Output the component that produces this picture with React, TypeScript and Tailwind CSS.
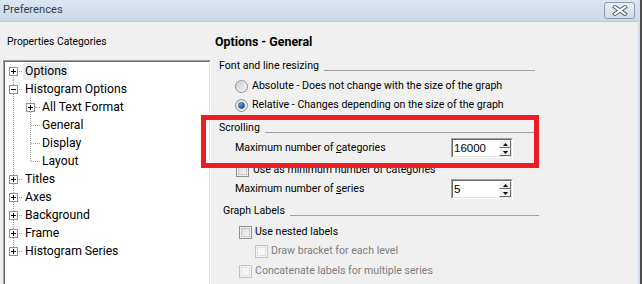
import React from "react";

const FONT = "font-['Roboto',sans-serif]";

function TreeRow({
  level,
  label,
  box,
  first,
  last,
  childLast,
  selected,
}: {
  level: 0 | 1;
  label: string;
  box?: "+" | "-";
  first?: boolean;
  last?: boolean;
  childLast?: boolean;
  selected?: boolean;
}) {
  const w = level === 0 ? 18 : 35;
  return (
    <div className="flex h-[18px] items-center">
      <svg width={w} height={18} className="shrink-0" shapeRendering="crispEdges">
        <line
          x1={8.5}
          x2={8.5}
          y1={level === 0 && first ? 9 : 0}
          y2={level === 0 && last ? 9 : 18}
          stroke="#a0a0a0"
          strokeDasharray="1 1"
        />
        {level === 0 && (
          <line x1={12} x2={18} y1={9.5} y2={9.5} stroke="#a0a0a0" strokeDasharray="1 1" />
        )}
        {level === 1 && (
          <>
            <line
              x1={25.5}
              x2={25.5}
              y1={0}
              y2={childLast ? 9 : 18}
              stroke="#a0a0a0"
              strokeDasharray="1 1"
            />
            <line x1={26} x2={35} y1={9.5} y2={9.5} stroke="#a0a0a0" strokeDasharray="1 1" />
          </>
        )}
        {box && (
          <g>
            <rect
              x={level === 0 ? 4.5 : 21.5}
              y={5.5}
              width={8}
              height={8}
              fill="#fff"
              stroke="#919191"
            />
            <line
              x1={level === 0 ? 6 : 23}
              x2={level === 0 ? 11 : 28}
              y1={9.5}
              y2={9.5}
              stroke="#000"
            />
            {box === "+" && (
              <line
                x1={level === 0 ? 8.5 : 25.5}
                x2={level === 0 ? 8.5 : 25.5}
                y1={7}
                y2={12}
                stroke="#000"
              />
            )}
          </g>
        )}
      </svg>
      <span
        className={`px-[2px] h-[17px] leading-[17px] text-[12.2px] text-black whitespace-nowrap ${
          selected ? "bg-[#ececec]" : ""
        }`}
      >
        {label}
      </span>
    </div>
  );
}

function Radio({ checked }: { checked?: boolean }) {
  return (
    <div className="w-[13px] h-[13px] rounded-full border border-[#8e8f8f] bg-gradient-to-br from-[#d9d9d9] to-[#f8f8f8] flex items-center justify-center shrink-0">
      {checked ? (
        <div className="w-[7px] h-[7px] rounded-full bg-gradient-to-br from-[#8ccaf0] via-[#2c7dc2] to-[#0b4d8c] border border-[#1e5a8f]" />
      ) : (
        <div className="w-[9px] h-[9px] rounded-full bg-gradient-to-br from-[#cfcfcf] to-[#f2f2f2]" />
      )}
    </div>
  );
}

function Check({ disabled }: { disabled?: boolean }) {
  return (
    <div
      className={`w-[13px] h-[13px] border shrink-0 flex items-center justify-center ${
        disabled ? "border-[#c4c4c4] bg-[#f4f4f4]" : "border-[#8e8f8f] bg-[#f4f4f4]"
      }`}
    >
      <div
        className={`w-[9px] h-[9px] ${
          disabled
            ? "border border-[#e2e2e2] bg-[#f6f6f6]"
            : "border border-[#c6c6c6] bg-gradient-to-br from-[#dadada] to-[#f7f7f7]"
        }`}
      />
    </div>
  );
}

function Spin({ value }: { value: string }) {
  return (
    <div className="w-[62px] h-[20px] border-t border-l border-[#a0a0a0] border-r border-b border-r-white border-b-white flex">
      <div className="flex-1 flex border-t border-l border-[#696969] border-r border-b border-r-[#e3e3e3] border-b-[#e3e3e3] bg-white">
        <div className="flex-1 pl-[1px] text-[11.5px] leading-[16px] font-['Liberation_Sans',sans-serif] text-black">
          {value}
        </div>
        <div className="w-[12px] flex flex-col bg-[#f0f0f0]">
          <div className="flex-1 flex items-center justify-center border-t border-l border-white border-r border-b border-r-[#696969] border-b-[#696969]">
            <svg width="5" height="3" viewBox="0 0 5 3">
              <path d="M2.5 0 L5 3 L0 3 Z" fill="#000" />
            </svg>
          </div>
          <div className="flex-1 flex items-center justify-center border-t border-l border-white border-r border-b border-r-[#696969] border-b-[#696969]">
            <svg width="5" height="3" viewBox="0 0 5 3">
              <path d="M0 0 L5 0 L2.5 3 Z" fill="#000" />
            </svg>
          </div>
        </div>
      </div>
    </div>
  );
}

function GroupLabel({ text, pl, pr }: { text: string; pl: string; pr: string }) {
  return (
    <div className={`flex items-center h-[16px] ${pl} ${pr}`}>
      <span className="whitespace-nowrap">{text}</span>
      <div className="flex-1 h-px bg-[#a0a0a0] mt-[9px] ml-[5px]" />
    </div>
  );
}

export default function App() {
  return (
    <div
      className={`relative w-[642px] h-[284px] overflow-hidden flex bg-[#f0f0f0] text-[10.6px] text-black ${FONT}`}
    >
      <div className="flex-1 flex flex-col min-w-0">
        <div className="h-[22px] shrink-0 flex items-center bg-gradient-to-b from-[#dbe6f2] to-[#c9d8e9] border-b border-[#b9c9da]">
          <span className="pl-[3px] text-[11.2px] text-[#3a3f45]">Preferences</span>
          <div className="flex-1" />
          <div className="mr-[3px] w-[31px] h-[17px] rounded-[3px] border border-[#8b9bb0] bg-gradient-to-b from-[#e9eff6] to-[#d2ddea] flex items-center justify-center">
            <svg width="16" height="11" viewBox="0 0 16 11">
              <path d="M3 2 L13 9 M13 2 L3 9" stroke="#5a6675" strokeWidth="4" strokeLinecap="square" />
              <path d="M3 2 L13 9 M13 2 L3 9" stroke="#ffffff" strokeWidth="2" strokeLinecap="square" />
            </svg>
          </div>
        </div>

        <div className="flex flex-1 min-h-0">
          <div className="w-[211px] shrink-0 pl-[3px] pt-[12px] flex flex-col">
            <div className="h-[16px] leading-[16px] pl-[4px] text-[10.3px] whitespace-nowrap">Properties Categories</div>
            <div className="mt-[10px] flex-1 border-t border-l border-[#a0a0a0] border-r border-r-white flex flex-col">
              <div className="flex-1 border-t border-l border-[#696969] border-r border-r-[#e3e3e3] bg-white">
                <TreeRow level={0} label="Options" box="+" first selected />
                <TreeRow level={0} label="Histogram Options" box="-" />
                <TreeRow level={1} label="All Text Format" box="+" />
                <TreeRow level={1} label="General" />
                <TreeRow level={1} label="Display" />
                <TreeRow level={1} label="Layout" childLast />
                <TreeRow level={0} label="Titles" box="+" />
                <TreeRow level={0} label="Axes" box="+" />
                <TreeRow level={0} label="Background" box="+" />
                <TreeRow level={0} label="Frame" box="+" />
                <TreeRow level={0} label="Histogram Series" box="+" last />
              </div>
            </div>
          </div>

          <div className="flex-1 pt-[12px] flex flex-col">
            <div className="h-[16px] leading-[16px] pl-[4px] font-bold text-[12.4px]">Options - General</div>

            <div className="mt-[8px]">
              <GroupLabel text="Font and line resizing" pl="pl-[8px]" pr="pr-[103px]" />
            </div>
            <div className="mt-[4px] h-[16px] flex items-center gap-[4px] pl-[24px]">
              <Radio />
              <span className="whitespace-nowrap">Absolute - Does not change with the size of the graph</span>
            </div>
            <div className="mt-[3px] h-[16px] flex items-center gap-[4px] pl-[24px]">
              <Radio checked />
              <span className="whitespace-nowrap">Relative - Changes depending on the size of the graph</span>
            </div>

            <div className="mt-[7px]">
              <GroupLabel text="Scrolling" pl="pl-[8px]" pr="pr-[99px]" />
            </div>
            <div className="mt-[2px] h-[20px] flex items-center pl-[24px]">
              <span className="w-[216px] whitespace-nowrap">
                Maximum number of <span className="underline">c</span>ategories
              </span>
              <Spin value="16000" />
            </div>
            <div className="mt-[4px] h-[16px] flex items-center gap-[4px] pl-[25px]">
              <Check />
              <span className="whitespace-nowrap">Use as minimum number of categories</span>
            </div>
            <div className="mt-[1px] h-[20px] flex items-center pl-[24px]">
              <span className="w-[216px] whitespace-nowrap">
                Maximum number of <span className="underline">s</span>eries
              </span>
              <Spin value="5" />
            </div>

            <div className="mt-[4px]">
              <GroupLabel text="Graph Labels" pl="pl-[12px]" pr="pr-[99px]" />
            </div>
            <div className="mt-[5px] h-[16px] flex items-center gap-[3px] pl-[28px]">
              <Check />
              <span className="whitespace-nowrap">Use nested labels</span>
            </div>
            <div className="mt-[3px] h-[16px] flex items-center gap-[3px] pl-[44px]">
              <Check disabled />
              <span className="whitespace-nowrap text-[#7d7d7d]">Draw bracket for each level</span>
            </div>
            <div className="mt-[4px] h-[16px] flex items-center gap-[3px] pl-[28px]">
              <Check disabled />
              <span className="whitespace-nowrap text-[#7d7d7d]">Concatenate labels for multiple series</span>
            </div>
          </div>
        </div>
      </div>
      <div className="w-[2px] bg-[#d3dfec]" />
      <div className="w-[2px] bg-[#4d4d4d]" />

      <div className="absolute left-[201px] top-[115px] w-[338px] h-[53px] border-[5px] border-[#ed1c24] pointer-events-none" />
    </div>
  );
}
